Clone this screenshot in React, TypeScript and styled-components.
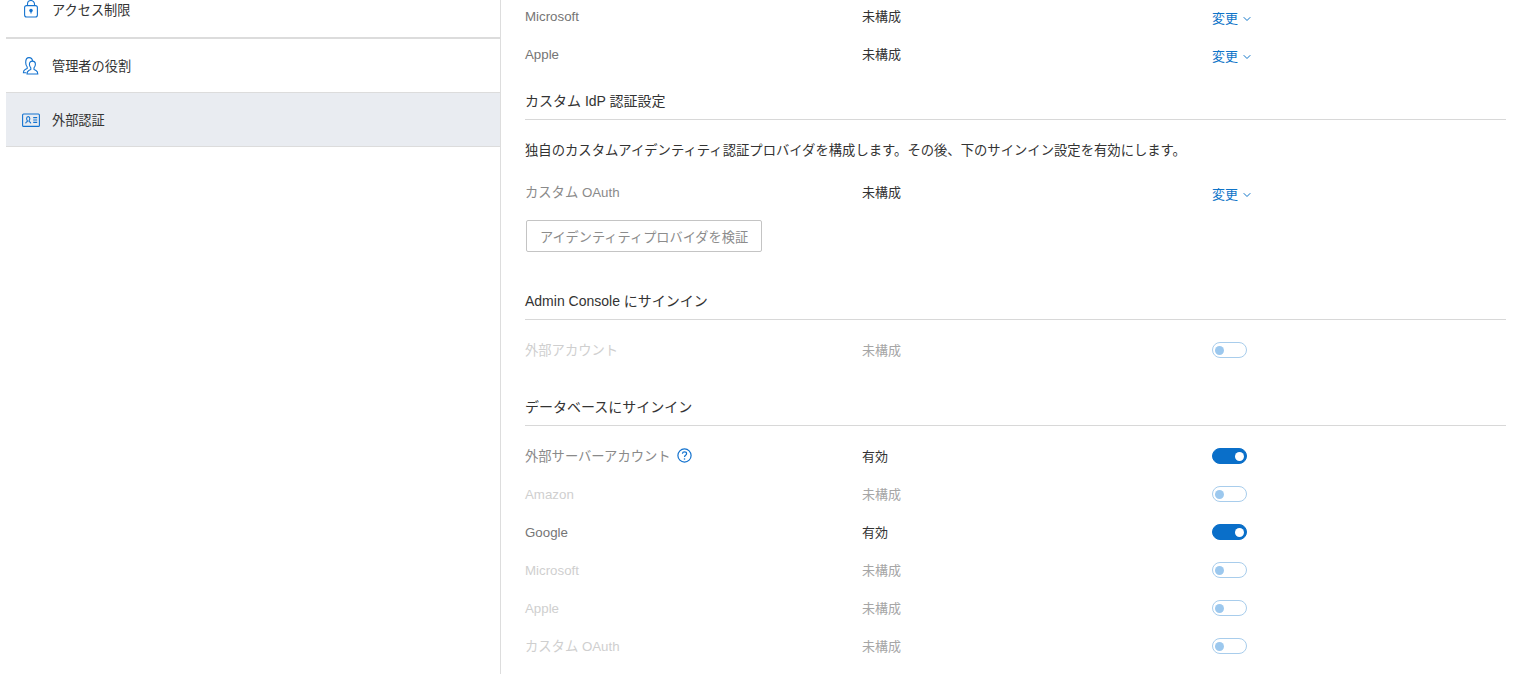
import React from 'react'
import styled, { createGlobalStyle } from 'styled-components'

const GlobalStyle = createGlobalStyle`
  html, body {
    margin: 0;
    padding: 0;
    background: #fff;
  }
  body {
    font-family: "Liberation Sans", "Noto Sans CJK JP", sans-serif;
    font-size: 13px;
    color: #333;
  }
`

const Page = styled.div`
  display: flex;
  height: 674px;
  overflow: hidden;
  background: #fff;
`
const Sidebar = styled.nav`
  width: 494px;
  margin-left: 6px;
  flex-shrink: 0;
  border-right: 1px solid #ddd;
`
const NavItem = styled.div<{ $active?: boolean; $first?: boolean }>`
  display: flex;
  align-items: center;
  gap: 12px;
  height: ${({ $first }) => ($first ? '39px' : '54px')};
  padding-left: 16px;
  padding-bottom: ${({ $first }) => ($first ? '19px' : '0')};
  box-sizing: border-box;
  background: ${({ $active }) => ($active ? '#e9ecf1' : 'transparent')};
  border-bottom: ${({ $first }) => ($first ? '2px solid #dcdcdc' : '1px solid #dcdcdc')};
  color: #333;
  font-size: 13.2px;
`
const NavIcon = styled.svg`
  width: 18px;
  height: 18px;
  flex-shrink: 0;
  fill: none;
  stroke: #1473cf;
  stroke-width: 1.1;
`
const Content = styled.main`
  flex: 1;
  padding: 0 16px 0 24px;
`
const Row = styled.div`
  display: grid;
  grid-template-columns: 337px 350px 1fr;
  align-items: center;
  height: 38px;
`
const Label = styled.div<{ $tone?: 'muted' | 'strong' | 'faint'; $nudge?: boolean }>`
  display: flex;
  align-items: center;
  gap: 6px;
  margin-top: ${({ $nudge }) => ($nudge ? '2px' : '0')};
  font-size: 13.3px;
  color: ${({ $tone }) => ($tone === 'faint' ? '#cfcfcf' : $tone === 'strong' ? '#757575' : '#8a8a8a')};
`
const Status = styled.div<{ $faint?: boolean }>`
  color: ${({ $faint }) => ($faint ? '#a6a6a6' : '#333')};
`
const ChangeLink = styled.a`
  display: inline-flex;
  align-items: center;
  gap: 5px;
  margin-top: 5px;
  color: #0f74c8;
`
const Chevron = styled.svg`
  width: 8px;
  height: 6px;
  margin-top: 3px;
  fill: none;
  stroke: #0f74c8;
  stroke-width: 1;
`
const SectionTitle = styled.h2<{ $gap: number }>`
  margin: ${({ $gap }) => $gap}px 0 0;
  height: 28px;
  line-height: 20px;
  font-size: 14px;
  font-weight: 400;
  color: #333;
  border-bottom: 1px solid #d8d8d8;
  box-sizing: content-box;
`
const Description = styled.p`
  margin: 0;
  padding-top: 20px;
  height: 32px;
  font-size: 13.33px;
  color: #333;
`
const VerifyButton = styled.button`
  display: block;
  width: 236px;
  height: 32px;
  margin: 10px 0 0 1px;
  padding: 0;
  background: #fff;
  border: 1px solid #c4c4c4;
  border-radius: 2px;
  font: inherit;
  font-size: 13.2px;
  color: #8c8c8c;
`
const Track = styled.div<{ $on: boolean }>`
  display: flex;
  align-items: center;
  justify-content: ${({ $on }) => ($on ? 'flex-end' : 'flex-start')};
  width: 35px;
  height: 16px;
  margin-top: 2px;
  padding: 0 2px;
  box-sizing: border-box;
  border-radius: 8px;
  background: ${({ $on }) => ($on ? '#0a6fc9' : '#fff')};
  border: 1px solid ${({ $on }) => ($on ? '#0a6fc9' : '#a8cdec')};
`
const Knob = styled.span<{ $on: boolean }>`
  width: 9px;
  height: 9px;
  border-radius: 50%;
  background: ${({ $on }) => ($on ? '#fff' : '#9cc8ee')};
`
const Help = styled.svg`
  width: 15px;
  height: 15px;
`
const FirstRows = styled.div`
  margin-top: -4px;
`
const Rows = styled.div<{ $top: number }>`
  margin-top: ${({ $top }) => $top}px;
`

function Change() {
  return (
    <div>
      <ChangeLink>
        変更
        <Chevron viewBox="0 0 8 6">
          <path d="M.7 1.2 4 4.5l3.3-3.3" />
        </Chevron>
      </ChangeLink>
    </div>
  )
}

function Toggle({ on }: { on: boolean }) {
  return (
    <Track $on={on}>
      <Knob $on={on} />
    </Track>
  )
}

const loginRows = [
  { name: 'Amazon', status: '未構成', on: false, latin: true },
  { name: 'Google', status: '有効', on: true, latin: true },
  { name: 'Microsoft', status: '未構成', on: false, latin: true },
  { name: 'Apple', status: '未構成', on: false, latin: true },
  { name: 'カスタム OAuth', status: '未構成', on: false, latin: false },
]

export default function App() {
  return (
    <>
      <GlobalStyle />
      <Page>
        <Sidebar>
          <NavItem $first>
            <NavIcon viewBox="0 0 18 18">
              <rect x="2.6" y="5.6" width="12.8" height="11.4" rx="2" />
              <path d="M5.5 5.5V4a3.5 3.5 0 0 1 7 0v1.5" />
              <circle cx="9" cy="10.4" r="1.2" fill="#1473cf" />
              <path d="M9 11v2.4" />
            </NavIcon>
            アクセス制限
          </NavItem>
          <NavItem>
            <NavIcon viewBox="0 0 18 18">
              <path d="M4.4 15.8H1.4c0-2 .6-2.7 1.8-3.3l2-1V10C4.3 9 3.7 7.5 3.7 5.4 3.7 2.5 5 .6 7 .6s3.4 1.6 3.6 3.6" />
              <path d="M5 17c0-2 .6-2.9 1.8-3.5l2-1v-1.6c-.9-.9-1.4-2.2-1.4-3.6 0-1.9 1.3-3.2 3-3.2s3 1.3 3 3.2c0 1.4-.5 2.7-1.4 3.6v1.6l2 1c1.2.6 1.8 1.5 1.8 3.5z" />
            </NavIcon>
            管理者の役割
          </NavItem>
          <NavItem $active>
            <NavIcon viewBox="0 0 18 18">
              <rect x="0.6" y="3" width="16.8" height="12.4" rx="1" />
              <path d="M3.6 12.4c.2-1.2 1-1.4 1.7-1.9V9.6C4.7 9 4.6 8.2 4.6 7.6c0-1.2.7-2 1.6-2s1.6.8 1.6 2c0 .6-.1 1.4-.7 2v.9c.7.5 1.5.7 1.7 1.9M11.2 6.6h4M11.2 9h4M11.2 11.4h4" />
            </NavIcon>
            外部認証
          </NavItem>
        </Sidebar>
        <Content>
          <FirstRows>
            <Row>
              <Label $tone="strong" $nudge>Microsoft</Label>
              <Status>未構成</Status>
              <Change />
            </Row>
            <Row>
              <Label $tone="strong" $nudge>Apple</Label>
              <Status>未構成</Status>
              <Change />
            </Row>
          </FirstRows>
          <SectionTitle $gap={19}>カスタム IdP 認証設定</SectionTitle>
          <Description>独自のカスタムアイデンティティ認証プロバイダを構成します。その後、下のサインイン設定を有効にします。</Description>
          <Rows $top={0}>
            <Row>
              <Label>カスタム OAuth</Label>
              <Status>未構成</Status>
              <Change />
            </Row>
          </Rows>
          <VerifyButton>アイデンティティプロバイダを検証</VerifyButton>
          <SectionTitle $gap={39}>Admin Console にサインイン</SectionTitle>
          <Rows $top={10}>
            <Row>
              <Label $tone="faint">外部アカウント</Label>
              <Status $faint>未構成</Status>
              <Toggle on={false} />
            </Row>
          </Rows>
          <SectionTitle $gap={29}>データベースにサインイン</SectionTitle>
          <Rows $top={10}>
            <Row>
              <Label>
                外部サーバーアカウント
                <Help viewBox="0 0 15 15">
                  <circle cx="7.5" cy="7.5" r="6.6" fill="none" stroke="#1473cf" strokeWidth="1.2" />
                  <path d="M5.4 5.8c.1-1.2 1-1.9 2.1-1.9s2.1.7 2.1 1.8c0 1.6-2.1 1.6-2.1 3.3" fill="none" stroke="#1473cf" strokeWidth="1.2" />
                  <circle cx="7.5" cy="11" r=".8" fill="#1473cf" />
                </Help>
              </Label>
              <Status>有効</Status>
              <Toggle on />
            </Row>
            {loginRows.map((r) => (
              <Row key={r.name}>
                <Label $tone={r.on ? 'strong' : 'faint'} $nudge={r.latin}>{r.name}</Label>
                <Status $faint={!r.on}>{r.status}</Status>
                <Toggle on={r.on} />
              </Row>
            ))}
          </Rows>
        </Content>
      </Page>
    </>
  )
}
